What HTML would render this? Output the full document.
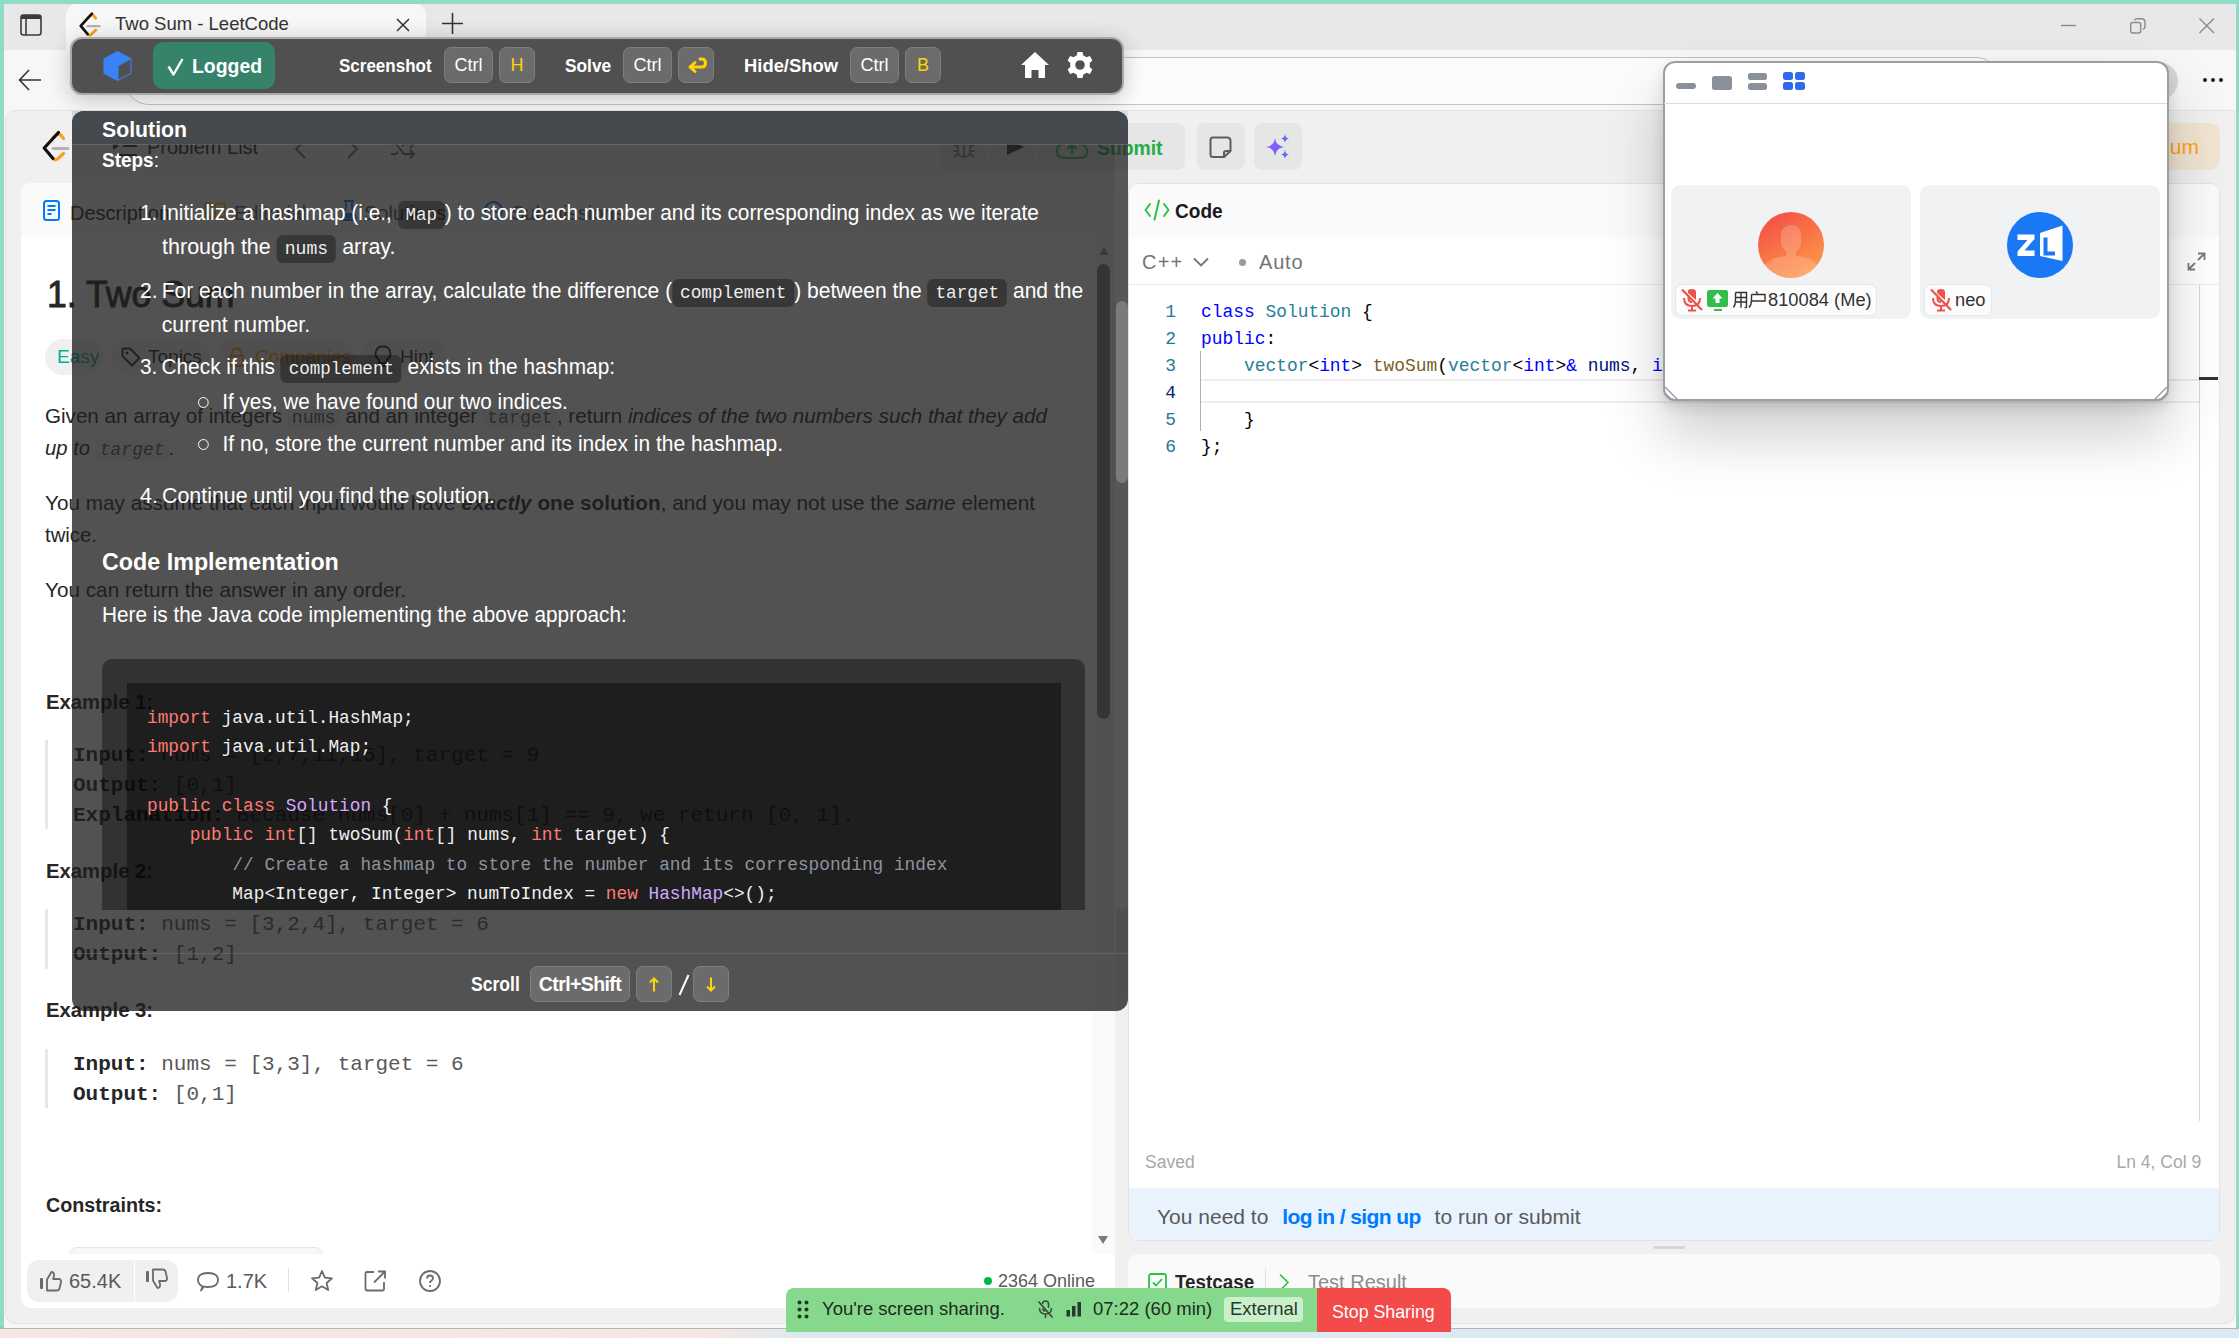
<!DOCTYPE html>
<html><head><meta charset="utf-8">
<style>
*{box-sizing:border-box;margin:0;padding:0}
html,body{width:2239px;height:1338px;overflow:hidden}
body{position:relative;background:#8ddcc8;font-family:"Liberation Sans",sans-serif;color:#262626}
.a{position:absolute;white-space:nowrap}
.mono{font-family:"Liberation Mono",monospace}
svg{position:absolute;overflow:visible}
/* browser */
#desk{left:0;top:1328px;width:2239px;height:10px;background:linear-gradient(90deg,#f7e6e1 0px,#f4e7e4 720px,#dde9ee 800px,#d9eaf2 2239px)}
#tabstrip{left:4px;top:4px;width:2232px;height:46px;background:#e8e8e8}
#tab{left:66px;top:4px;width:360px;height:48px;background:#f7f7f7;border-radius:10px 10px 0 0}
#toolbar{left:4px;top:50px;width:2232px;height:1278px;background:#f7f7f7}
#addr{left:125px;top:57px;width:1875px;height:48px;border:1.5px solid #c4c4c4;border-radius:24px;background:#fcfcfc}
#page{left:5px;top:110px;width:2230px;height:1214px;background:#f0f0f0;border-radius:10px 0 10px 10px;border:1px solid #e4e4e4}
.lcbtn{background:#e6e6e6;border-radius:8px}
.panel{background:#fff;border-radius:10px;overflow:hidden}

.desc{transform-origin:0 0;left:45px;font-size:20.3px;color:#262626;line-height:20px}
.desc code{font-family:"Liberation Mono",monospace;font-size:18px;color:#595959;background:#f7f7f7;border:1px solid #eee;border-radius:5px;padding:0 3px}
.exh{transform-origin:0 0;left:46px;font-size:20.3px;font-weight:bold;color:#262626;line-height:20px}
.ex{left:73px;font-family:"Liberation Mono",monospace;font-size:21px;color:#595959;line-height:21px}
.ex b{color:#262626}

.ovt{color:#fff;line-height:1}
.ovl{left:140px;font-size:21.4px;color:#fff;line-height:21px;transform-origin:0 0}
.ovl .n{display:inline-block;width:22px}
.ovl code{font-family:"Liberation Mono",monospace;font-size:18px;background:rgba(0,0,0,0.32);border-radius:6px;padding:4px 8px;color:#eee}
.ovl .bul{display:inline-block;width:11px;height:11px;border:1.5px solid #fff;border-radius:50%;margin-right:14px;vertical-align:1px}
.ovc{left:147px;font-family:"Liberation Mono",monospace;font-size:17.8px;color:#f0f0f0;line-height:18px;white-space:pre}
.ovc .k{color:#ff7b72}.ovc .c{color:#d2a8ff}.ovc .cm{color:#8b949e}
.kc{background:#6b6b6b;border:1px solid #7e7e7e;border-radius:7px;text-align:center;font-size:18px;line-height:34px}

.lnum{left:1150px;width:26px;text-align:right;font-family:"Liberation Mono",monospace;font-size:17.9px;color:#237893;line-height:18px}
.ed{left:1201px;font-family:"Liberation Mono",monospace;font-size:17.9px;color:#000;line-height:18px;white-space:pre}
.ed .kw{color:#0000ff}.ed .ty{color:#267f99}.ed .fn{color:#795e26}.ed .va{color:#001080}
</style></head><body>
<div id="desk" class="a"></div>
<div class="a" style="left:0;top:1327px;width:2239px;height:1.5px;background:#b5b5b5"></div>
<div id="tabstrip" class="a"></div>
<div id="tab" class="a"></div>
<div id="toolbar" class="a"></div>
<!-- sidebar icon -->
<svg style="left:20px;top:14px" width="22" height="22" viewBox="0 0 22 22"><rect x="1" y="1" width="20" height="20" rx="2.5" fill="none" stroke="#3a3a3a" stroke-width="1.6"/><rect x="1" y="1" width="20" height="4" fill="#3a3a3a"/><line x1="6" y1="5" x2="6" y2="21" stroke="#3a3a3a" stroke-width="1.6"/></svg>
<!-- lc favicon -->
<svg style="left:79px;top:12px" width="22" height="26" viewBox="0 0 28 32"><path d="M10.5 7.5L14.5 3.8Q16.5 2.3 18.5 4L21.5 7.5M11 27.5Q13 29.8 15.5 28L21.5 22.5" fill="none" stroke="#f89f1b" stroke-width="3.4" stroke-linecap="round"/><path d="M16.5 1.5L2.2 17L11 27.5" fill="none" stroke="#111" stroke-width="3.4" stroke-linecap="round" stroke-linejoin="round"/><path d="M11 17.5H26" stroke="#b3b3b3" stroke-width="3" stroke-linecap="round"/></svg>
<div class="a" style="left:115px;top:15px;font-size:18.5px;color:#333;line-height:1">Two Sum - LeetCode</div>
<svg style="left:396px;top:18px" width="14" height="14" viewBox="0 0 14 14"><path d="M1 1L13 13M13 1L1 13" stroke="#333" stroke-width="1.5"/></svg>
<svg style="left:442px;top:13px" width="21" height="21" viewBox="0 0 21 21"><path d="M10.5 0V21M0 10.5H21" stroke="#333" stroke-width="1.6"/></svg>
<svg style="left:2061px;top:18px" width="16" height="16" viewBox="0 0 16 16"><path d="M0 7.5H15" stroke="#8a8a8a" stroke-width="1.4"/></svg>
<svg style="left:2130px;top:18px" width="16" height="16" viewBox="0 0 16 16"><rect x="0.7" y="4.5" width="10" height="10.5" rx="2" fill="none" stroke="#8a8a8a" stroke-width="1.4"/><path d="M4.5 2.2Q5 0.7 7 0.7H11.5Q15 0.7 15 4V8.5Q15 10.5 13 11" fill="none" stroke="#8a8a8a" stroke-width="1.4"/></svg>
<svg style="left:2199px;top:18px" width="16" height="16" viewBox="0 0 16 16"><path d="M0.5 0.5L15 15M15 0.5L0.5 15" stroke="#8a8a8a" stroke-width="1.4"/></svg>
<!-- toolbar -->
<svg style="left:18px;top:68px" width="24" height="24" viewBox="0 0 24 24"><path d="M23 12H2M11 2L1.5 12L11 22" fill="none" stroke="#333" stroke-width="1.6"/></svg>
<div id="addr" class="a"></div>
<div class="a" style="left:2140px;top:62px;width:38px;height:38px;border-radius:19px;background:#d9d9d9"></div>

<div class="a" style="left:2203px;top:78px;width:4px;height:4px;border-radius:2px;background:#222;box-shadow:8px 0 0 #222,16px 0 0 #222"></div>

<!-- LeetCode page -->
<div id="page" class="a"></div>
<svg style="left:42px;top:131px" width="28" height="32" viewBox="0 0 28 32"><path d="M10.5 7.5L14.5 3.8Q16.5 2.3 18.5 4L21.5 7.5M11 27.5Q13 29.8 15.5 28L21.5 22.5" fill="none" stroke="#f89f1b" stroke-width="3.2" stroke-linecap="round"/><path d="M16.5 1.5L2.2 17L11 27.5" fill="none" stroke="#111" stroke-width="3.2" stroke-linecap="round" stroke-linejoin="round"/><path d="M11 17.5H26" stroke="#b3b3b3" stroke-width="2.8" stroke-linecap="round"/></svg>
<div class="a" style="left:82px;top:140px;width:1px;height:22px;background:#ddd"></div>
<!-- problem list -->
<svg style="left:112px;top:140px" width="26" height="20" viewBox="0 0 26 20"><path d="M1 2L7 6L1 10Z" fill="#333"/><path d="M11 6H25M4 15H25" stroke="#333" stroke-width="2.2"/></svg>
<div class="a" style="left:147px;top:136px;font-size:20px;color:#262626">Problem List</div>
<svg style="left:293px;top:138px" width="14" height="22" viewBox="0 0 14 22"><path d="M12 2L3 11L12 20" fill="none" stroke="#6a6a6a" stroke-width="1.8"/></svg>
<svg style="left:346px;top:138px" width="14" height="22" viewBox="0 0 14 22"><path d="M2 2L11 11L2 20" fill="none" stroke="#6a6a6a" stroke-width="1.8"/></svg>
<svg style="left:390px;top:138px" width="26" height="22" viewBox="0 0 26 22"><path d="M1 6H6L14 16H24M1 16H6L8 13.5M12 8.5L14 6H24M20 2L24 6L20 10M20 12L24 16L20 20" fill="none" stroke="#6a6a6a" stroke-width="1.8"/></svg>
<!-- center buttons -->
<div class="a lcbtn" style="left:940px;top:123px;width:245px;height:47px"></div>
<div class="a" style="left:988px;top:128px;width:1px;height:37px;background:#f7f7f7"></div>
<div class="a" style="left:1036px;top:128px;width:1px;height:37px;background:#f7f7f7"></div>
<svg style="left:952px;top:136px" width="24" height="22" viewBox="0 0 24 22"><path d="M8 3Q12 0 16 3M6 8H18V15Q18 21 12 21Q6 21 6 15ZM12 8V21M2 9L6 11M22 9L18 11M1 15H6M23 15H18M2 21L6 18M22 21L18 18" fill="none" stroke="#777" stroke-width="1.6"/></svg>
<svg style="left:1005px;top:137px" width="20" height="20" viewBox="0 0 20 20"><path d="M2 2L19 10L2 18Z" fill="#333"/></svg>
<svg style="left:1056px;top:136px" width="32" height="24" viewBox="0 0 32 24"><path d="M9 22H24Q31 22 31 15Q31 9 24 8Q22 1 15 1Q8 1 7 8Q1 9 1 15Q1 22 9 22Z" fill="none" stroke="#28c244" stroke-width="2.2"/><path d="M16 18V9M11.5 13L16 8.5L20.5 13" fill="none" stroke="#28c244" stroke-width="2.2"/></svg>
<div class="a" style="left:1097px;top:137px;font-size:21px;line-height:1;font-weight:bold;color:#1fae48;transform:scaleX(0.92);transform-origin:0 0">Submit</div>
<div class="a lcbtn" style="left:1197px;top:123px;width:48px;height:47px"></div>
<svg style="left:1209px;top:136px" width="24" height="22" viewBox="0 0 24 22"><path d="M4 1.5H18Q21.5 1.5 21.5 5V15L15 21H4Q1.5 21 1.5 18.5V4Q1.5 1.5 4 1.5ZM21.5 15H17Q15 15 15 17V21" fill="none" stroke="#5c5c5c" stroke-width="2"/></svg>
<div class="a lcbtn" style="left:1254px;top:123px;width:48px;height:47px"></div>
<svg style="left:1264px;top:133px" width="28" height="28" viewBox="0 0 28 28"><defs><linearGradient id="sg" x1="0" y1="0" x2="1" y2="1"><stop offset="0" stop-color="#a451f7"/><stop offset="1" stop-color="#5c6cf5"/></linearGradient></defs><path d="M11 5Q12 13 20 14Q12 15 11 23Q10 15 2 14Q10 13 11 5Z" fill="url(#sg)"/><path d="M21 1Q21.5 5 25 5.5Q21.5 6 21 10Q20.5 6 17 5.5Q20.5 5 21 1Z" fill="#5c6cf5"/><path d="M21 17Q21.5 21 25 21.5Q21.5 22 21 26Q20.5 22 17 21.5Q20.5 21 21 17Z" fill="#5c6cf5"/></svg>
<div class="a" style="left:2080px;top:123px;width:140px;height:47px;background:#f2e4d2;border-radius:10px"></div>
<div class="a" style="left:2115px;top:136px;font-size:21px;line-height:1;color:#ffa116">Premium</div>

<!-- LEFT PANEL -->
<div id="lp" class="a panel" style="left:21px;top:183px;width:1094px;height:1125px">
  <div class="a" style="left:0;top:0;width:1094px;height:54px;background:#fafafa"></div>
</div>


<!-- LEFT PANEL CONTENT -->
<svg style="left:43px;top:200px" width="17" height="21" viewBox="0 0 17 21"><rect x="1" y="1" width="15" height="19" rx="2.5" fill="none" stroke="#007aff" stroke-width="2"/><path d="M4.5 6H12.5M4.5 10H12.5M4.5 14H8.5" stroke="#007aff" stroke-width="2"/></svg>
<div class="a" style="left:70px;top:202px;font-size:20px;color:#262626">Description</div>
<div class="a" style="left:191px;top:202px;width:1px;height:20px;background:#e0e0e0"></div>
<svg style="left:204px;top:201px" width="22" height="20" viewBox="0 0 22 20"><path d="M1 3Q6 1 11 4Q16 1 21 3V17Q16 15 11 18Q6 15 1 17Z" fill="none" stroke="#ffb800" stroke-width="1.8"/><path d="M11 4V18" stroke="#ffb800" stroke-width="1.8"/></svg>
<div class="a" style="left:234px;top:202px;font-size:20px;color:#5a5a5a">Editorial</div>
<div class="a" style="left:325px;top:202px;width:1px;height:20px;background:#e0e0e0"></div>
<svg style="left:341px;top:199px" width="16" height="22" viewBox="0 0 16 22"><path d="M5 2V9L1 19Q1 21 3 21H13Q15 21 15 19L11 9V2M3 2H13M2.5 15H13.5" fill="none" stroke="#007aff" stroke-width="1.8"/><path d="M3 15H13L14.5 19.5H1.5Z" fill="#007aff"/></svg>
<div class="a" style="left:364px;top:202px;font-size:20px;color:#5a5a5a">Solutions</div>
<div class="a" style="left:469px;top:202px;width:1px;height:20px;background:#e0e0e0"></div>
<svg style="left:482px;top:200px" width="22" height="21" viewBox="0 0 22 21"><path d="M3 10.5A8.5 8.5 0 1 1 5.5 16.5" fill="none" stroke="#007aff" stroke-width="1.8"/><path d="M0.5 8L3 11L6 8.5M11.5 5.5V10.5L15 12.5" fill="none" stroke="#007aff" stroke-width="1.8"/></svg>
<div class="a" style="left:511px;top:202px;font-size:20px;color:#5a5a5a">Submissions</div>

<div class="a" style="left:47px;top:274px;font-size:36px;color:#262626;-webkit-text-stroke:0.9px #262626;transform:scaleX(0.99);transform-origin:0 0">1. Two Sum</div>
<div class="a" style="left:45px;top:339px;width:58px;height:36px;border-radius:18px;background:#f0f0f0"></div>
<div class="a" style="left:57px;top:346px;font-size:19px;color:#00af9b">Easy</div>
<div class="a" style="left:111px;top:339px;width:98px;height:36px;border-radius:18px;background:#f0f0f0"></div>
<svg style="left:121px;top:347px" width="20" height="20" viewBox="0 0 20 20"><path d="M1.5 2.5V9L11 18.5L18.5 11L9 1.5H2.5Z" fill="none" stroke="#262626" stroke-width="1.8" stroke-linejoin="round"/><circle cx="6" cy="6" r="1.5" fill="#262626"/></svg>
<div class="a" style="left:148px;top:346px;font-size:19px;color:#262626">Topics</div>
<div class="a" style="left:216px;top:339px;width:138px;height:36px;border-radius:18px;background:#f0f0f0"></div>
<svg style="left:228px;top:347px" width="17" height="20" viewBox="0 0 17 20"><path d="M4 9V6Q4 1.5 8.5 1.5Q13 1.5 13 6V9M2 9H15V19H2Z" fill="none" stroke="#ffa116" stroke-width="1.8"/></svg>
<div class="a" style="left:255px;top:346px;font-size:19px;color:#ffa116">Companies</div>
<div class="a" style="left:361px;top:339px;width:85px;height:36px;border-radius:18px;background:#f0f0f0"></div>
<svg style="left:374px;top:345px" width="18" height="24" viewBox="0 0 18 24"><path d="M9 1.5A7 7 0 0 0 5 14.5V18H13V14.5A7 7 0 0 0 9 1.5ZM6 21H12" fill="none" stroke="#262626" stroke-width="1.8"/></svg>
<div class="a" style="left:400px;top:346px;font-size:19px;color:#262626">Hint</div>

<div class="a desc" style="top:406px;transform:scaleX(1.0157)">Given an array of integers <code>nums</code> and an integer <code>target</code>, return <i>indices of the two numbers such that they add</i></div>
<div class="a desc" style="top:438px"><i>up to <code>target</code></i>.</div>
<div class="a desc" style="top:493px;transform:scaleX(1.022)">You may assume that each input would have <b><i>exactly</i> one solution</b>, and you may not use the <i>same</i> element</div>
<div class="a desc" style="top:525px">twice.</div>
<div class="a desc" style="top:580px;transform:scaleX(1.022)">You can return the answer in any order.</div>

<div class="a exh" style="top:692px">Example 1:</div>
<div class="a" style="left:45px;top:740px;width:3px;height:89px;background:#e8e8e8"></div>
<div class="a ex" style="top:745px"><b>Input:</b> nums = [2,7,11,15], target = 9</div>
<div class="a ex" style="top:775px"><b>Output:</b> [0,1]</div>
<div class="a ex" style="top:805px"><b>Explanation:</b> Because nums[0] + nums[1] == 9, we return [0, 1].</div>
<div class="a exh" style="top:861px">Example 2:</div>
<div class="a" style="left:45px;top:909px;width:3px;height:60px;background:#e8e8e8"></div>
<div class="a ex" style="top:914px"><b>Input:</b> nums = [3,2,4], target = 6</div>
<div class="a ex" style="top:944px"><b>Output:</b> [1,2]</div>
<div class="a exh" style="top:1000px">Example 3:</div>
<div class="a" style="left:45px;top:1049px;width:3px;height:59px;background:#e8e8e8"></div>
<div class="a ex" style="top:1054px"><b>Input:</b> nums = [3,3], target = 6</div>
<div class="a ex" style="top:1084px"><b>Output:</b> [0,1]</div>
<div class="a exh" style="top:1195px;transform:scaleX(0.972)">Constraints:</div>
<div class="a" style="left:69px;top:1247px;width:254px;height:20px;border-radius:8px 8px 0 0;border:1px solid #e6e6e6;background:#f7f7f7"></div>
<div class="a" style="left:21px;top:1254px;width:1094px;height:54px;background:#fff;border-radius:0 0 10px 10px"></div>
<div class="a" style="left:1092px;top:237px;width:23px;height:1017px;background:#fafafa"></div>
<!-- scrollbar arrow -->
<svg style="left:1097px;top:1235px" width="12" height="10" viewBox="0 0 12 10"><path d="M1 1H11L6 9Z" fill="#7a7a7a"/></svg>
<!-- bottom bar -->
<div class="a" style="left:27px;top:1260px;width:107px;height:42px;border-radius:12px 0 0 12px;background:#f0f0f0"></div>
<div class="a" style="left:135px;top:1260px;width:43px;height:42px;border-radius:0 12px 12px 0;background:#f0f0f0"></div>
<svg style="left:39px;top:1270px" width="24" height="22" viewBox="0 0 24 22"><rect x="1" y="8" width="3" height="11" rx="1" fill="#6b6b6b"/><path d="M8 9.5L12.5 2Q15.5 2 15 6L14 9H20Q22.5 9.5 22 12L20.5 18.5Q20 20.5 17.5 20.5H8Z" fill="none" stroke="#6b6b6b" stroke-width="1.8" stroke-linejoin="round"/></svg>
<div class="a" style="left:69px;top:1270px;font-size:20px;color:#595959">65.4K</div>
<svg style="left:145px;top:1268px" width="24" height="22" viewBox="0 0 24 22"><rect x="1" y="3" width="3" height="11" rx="1" fill="#6b6b6b"/><path d="M8 12.5L12.5 20Q15.5 20 15 16L14 13H20Q22.5 12.5 22 10L20.5 3.5Q20 1.5 17.5 1.5H8Z" fill="none" stroke="#6b6b6b" stroke-width="1.8" stroke-linejoin="round"/></svg>
<svg style="left:196px;top:1271px" width="24" height="21" viewBox="0 0 24 21"><path d="M5 19.5L6.5 15.5Q2 13 2 9Q2 2 12 2Q22 2 22 9Q22 16 12 16Q9.5 16 8 15.5Z" fill="none" stroke="#6b6b6b" stroke-width="1.8" stroke-linejoin="round"/></svg>
<div class="a" style="left:226px;top:1270px;font-size:20px;color:#595959">1.7K</div>
<div class="a" style="left:288px;top:1268px;width:1px;height:24px;background:#e0e0e0"></div>
<svg style="left:310px;top:1269px" width="24" height="24" viewBox="0 0 24 24"><path d="M12 2L14.9 8.6L22 9.3L16.6 14L18.2 21L12 17.3L5.8 21L7.4 14L2 9.3L9.1 8.6Z" fill="none" stroke="#6b6b6b" stroke-width="1.8" stroke-linejoin="round"/></svg>
<svg style="left:364px;top:1270px" width="24" height="22" viewBox="0 0 24 22"><path d="M10 2H3Q1.5 2 1.5 3.5V19Q1.5 20.5 3 20.5H18.5Q20 20.5 20 19V12M14 1.5H21V8.5M21 1.5L10 12.5" fill="none" stroke="#6b6b6b" stroke-width="1.8"/></svg>
<svg style="left:418px;top:1270px" width="24" height="24" viewBox="0 0 24 24"><circle cx="12" cy="11" r="10" fill="none" stroke="#6b6b6b" stroke-width="1.8"/><path d="M9 8.5Q9 5.5 12 5.5Q15 5.5 15 8.3Q15 10 13 11Q12 11.7 12 13" fill="none" stroke="#6b6b6b" stroke-width="1.8"/><circle cx="12" cy="16" r="1.1" fill="#6b6b6b"/></svg>
<div class="a" style="left:984px;top:1277px;width:8px;height:8px;border-radius:4px;background:#00b84a"></div>
<div class="a" style="left:998px;top:1271px;font-size:18px;color:#595959">2364 Online</div>

<!-- RIGHT PANEL -->
<div id="rp" class="a panel" style="left:1128px;top:183px;width:1092px;height:1058px;border:1px solid #e3e3e3">
  <div class="a" style="left:0;top:0;width:1092px;height:53px;background:#fafafa"></div>
  <div class="a" style="left:0;top:100px;width:1092px;height:1px;background:#ececec"></div>
  <div class="a" style="left:0;top:1004px;width:1092px;height:54px;background:#e8f3fd"></div>
</div>
<svg style="left:1144px;top:199px" width="26" height="22" viewBox="0 0 26 22"><path d="M6 5L1.5 11L6 17M20 5L24.5 11L20 17M15 1.5L10.5 20.5" fill="none" stroke="#28c244" stroke-width="2" stroke-linecap="round" stroke-linejoin="round"/></svg>
<div class="a" style="left:1175px;top:200.5px;font-size:20.5px;font-weight:bold;color:#1a1a1a;line-height:1;transform:scaleX(0.93);transform-origin:0 0">Code</div>
<div class="a" style="left:1142px;top:252px;font-size:20px;color:#737373;line-height:1;letter-spacing:1.2px">C++</div>
<svg style="left:1193px;top:257px" width="16" height="10" viewBox="0 0 16 10"><path d="M1 1.5L8 8.5L15 1.5" fill="none" stroke="#737373" stroke-width="1.8"/></svg>
<div class="a" style="left:1239px;top:259px;width:7px;height:7px;border-radius:4px;background:#9a9a9a"></div>
<div class="a" style="left:1259px;top:252px;font-size:20px;color:#737373;line-height:1;letter-spacing:0.8px">Auto</div>
<svg style="left:2187px;top:252px" width="19" height="19" viewBox="0 0 19 19"><path d="M11 1.5H17.5V8M17.5 1.5L11 8M8 17.5H1.5V11M1.5 17.5L8 11" fill="none" stroke="#7a7a7a" stroke-width="1.8"/></svg>
<!-- editor -->
<div class="a" style="left:1200px;top:379px;width:1000px;height:24px;border-top:2px solid #eeeeee;border-bottom:2px solid #eeeeee"></div>
<div class="a" style="left:1200px;top:351px;width:1px;height:80px;background:#b0b0b0"></div>
<div class="a lnum" style="top:303px">1</div>
<div class="a lnum" style="top:330px">2</div>
<div class="a lnum" style="top:357px">3</div>
<div class="a lnum" style="top:384px;color:#0b216f">4</div>
<div class="a lnum" style="top:411px">5</div>
<div class="a lnum" style="top:438px">6</div>
<div class="a ed" style="top:303px"><span class="kw">class</span> <span class="ty">Solution</span> {</div>
<div class="a ed" style="top:330px"><span class="kw">public</span>:</div>
<div class="a ed" style="top:357px">    <span class="ty">vector</span>&lt;<span class="kw">int</span>&gt; <span class="fn">twoSum</span>(<span class="ty">vector</span>&lt;<span class="kw">int</span>&gt;<span class="kw">&amp;</span> <span class="va">nums</span>, <span class="kw">int</span> <span class="va">target</span>) {</div>
<div class="a ed" style="top:411px">    }</div>
<div class="a ed" style="top:438px">};</div>
<div class="a" style="left:2199px;top:285px;width:1px;height:836px;background:#d9d9d9"></div>
<div class="a" style="left:2199px;top:377px;width:19px;height:3px;background:#333"></div>
<div class="a" style="left:1145px;top:1154px;font-size:17.5px;color:#a8a8a8;line-height:1">Saved</div>
<div class="a" style="left:2116.5px;top:1154px;font-size:17.5px;color:#a8a8a8;line-height:1">Ln 4, Col 9</div>
<div class="a" style="left:1157px;top:1206px;font-size:21px;color:#595959;line-height:1">You need to <span style="color:#007aff;margin:0 8px;font-weight:bold;letter-spacing:-0.6px">log in / sign up</span> to run or submit</div>
<div class="a" style="left:1653px;top:1246px;width:32px;height:3px;border-radius:2px;background:#d6d6d6"></div>
<!-- testcase panel -->
<div class="a" style="left:1128px;top:1254px;width:1092px;height:54px;border-radius:10px;background:#fafafa"></div>
<svg style="left:1148px;top:1273px" width="19" height="19" viewBox="0 0 19 19"><rect x="1" y="1" width="17" height="17" rx="2" fill="none" stroke="#28c244" stroke-width="1.8"/><path d="M5 9.5L8 12.5L14 6" fill="none" stroke="#28c244" stroke-width="1.8"/></svg>
<div class="a" style="left:1175px;top:1272px;font-size:20px;font-weight:bold;color:#262626;line-height:1;transform:scaleX(0.94);transform-origin:0 0">Testcase</div>
<div class="a" style="left:1265px;top:1268px;width:1px;height:24px;background:#e0e0e0"></div>
<svg style="left:1278px;top:1273px" width="12" height="19" viewBox="0 0 12 19"><path d="M2 1.5L10 9.5L2 17.5" fill="none" stroke="#28c244" stroke-width="1.6"/></svg>
<div class="a" style="left:1308px;top:1272px;font-size:20px;color:#8c8c8c;line-height:1">Test Result</div>


<div class="a" style="left:1118px;top:111px;width:10px;height:10px;background:#d3e2ef"></div>
<div class="a" style="left:72px;top:111px;width:10px;height:10px;background:#c9d9e8"></div>
<!-- ===== OVERLAY SOLUTION PANEL ===== -->
<div class="a" style="left:72px;top:111px;width:1056px;height:900px;border-radius:12px 12px 12px 12px;background:rgba(30,30,30,0.77);overflow:hidden">
  <div class="a" style="left:0;top:0;width:1056px;height:33px;background:#464a4e"></div>
  <div class="a" style="left:0;top:33px;width:1056px;height:1px;background:rgba(120,120,120,0.55)"></div>
  <div class="a" style="left:0;top:842px;width:1056px;height:1px;background:rgba(120,120,120,0.45)"></div>
  <div class="a" style="left:1043px;top:33px;width:1px;height:809px;background:rgba(110,110,110,0.35)"></div>
</div>
<div class="a ovt" style="left:102px;top:117.6px;font-size:22.9px;font-weight:bold;transform:scaleX(0.929);transform-origin:0 0">Solution</div>
<div class="a ovt" style="left:102px;top:149.7px;font-size:20.4px;transform:scaleX(0.93);transform-origin:0 0"><b>Steps</b>:</div>
<div class="a ovl" style="top:203.1px;transform:scaleX(0.974)"><span class="n">1.</span>Initialize a hashmap (i.e., <code>Map</code>) to store each number and its corresponding index as we iterate</div>
<div class="a ovl" style="top:236.7px;transform:scaleX(1.004)"><span class="n"></span>through the <code>nums</code> array.</div>
<div class="a ovl" style="top:281.1px;transform:scaleX(0.984)"><span class="n">2.</span>For each number in the array, calculate the difference (<code>complement</code>) between the <code>target</code> and the</div>
<div class="a ovl" style="top:314.7px;transform:scaleX(0.99)"><span class="n"></span>current number.</div>
<div class="a ovl" style="top:356.8px;transform:scaleX(0.975)"><span class="n">3.</span>Check if this <code>complement</code> exists in the hashmap:</div>
<div class="a ovl" style="top:391.9px;left:198px;transform:scaleX(0.969)"><span class="bul"></span>If yes, we have found our two indices.</div>
<div class="a ovl" style="top:434.3px;left:198px;transform:scaleX(0.98)"><span class="bul"></span>If no, store the current number and its index in the hashmap.</div>
<div class="a ovl" style="top:485.7px"><span class="n">4.</span>Continue until you find the solution.</div>
<div class="a ovt" style="left:102px;top:550.4px;font-size:23.9px;font-weight:bold;transform:scaleX(0.975);transform-origin:0 0">Code Implementation</div>
<div class="a ovl" style="top:605.1px;left:102px;transform:scaleX(0.97)">Here is the Java code implementing the above approach:</div>
<div class="a" style="left:102px;top:659px;width:983px;height:251px;border-radius:10px 10px 0 0;background:rgba(0,0,0,0.38)"></div>
<div class="a" style="left:127px;top:683px;width:934px;height:227px;background:rgba(0,0,0,0.40)"></div>
<div class="a ovc" style="top:709px"><span class="k">import</span> java.util.HashMap;</div>
<div class="a ovc" style="top:738px"><span class="k">import</span> java.util.Map;</div>
<div class="a ovc" style="top:797px"><span class="k">public class</span> <span class="c">Solution</span> {</div>
<div class="a ovc" style="top:826px">    <span class="k">public int</span>[] twoSum(<span class="k">int</span>[] nums, <span class="k">int</span> target) {</div>
<div class="a ovc" style="top:856px">        <span class="cm">// Create a hashmap to store the number and its corresponding index</span></div>
<div class="a ovc" style="top:885px">        Map&lt;Integer, Integer&gt; numToIndex = <span class="k">new</span> <span class="c">HashMap</span>&lt;&gt;();</div>
<!-- overlay scrollbar -->
<svg style="left:1098px;top:246px" width="12" height="10" viewBox="0 0 12 10"><path d="M6 1L11 9H1Z" fill="#3a3a3a"/></svg>
<div class="a" style="left:1097px;top:264px;width:13px;height:455px;border-radius:7px;background:#353535"></div>
<div class="a" style="left:1115.5px;top:144px;width:12.5px;height:766px;border-radius:0 0 6px 6px;background:rgba(255,255,255,0.045)"></div>
<div class="a" style="left:1116px;top:301px;width:12px;height:182px;border-radius:6px;background:#7b7b7b"></div>
<!-- footer -->
<div class="a ovt" style="left:471px;top:975px;font-size:19.5px;font-weight:bold;transform:scaleX(0.9);transform-origin:0 0">Scroll</div>
<div class="a kc" style="left:530px;top:966px;width:100px;height:36px;color:#fff;font-size:19.5px;font-weight:bold;letter-spacing:-0.6px">Ctrl+Shift</div>
<div class="a kc" style="left:636px;top:966px;width:36px;height:36px"></div><svg style="left:648px;top:977px" width="12" height="15" viewBox="0 0 12 15"><path d="M6 1.5V14.5M2 5.5L6 1.5L10 5.5" fill="none" stroke="#ffd400" stroke-width="2"/></svg>
<svg style="left:677px;top:974px" width="14" height="22" viewBox="0 0 14 22"><path d="M11.5 1L2.5 21" stroke="#fff" stroke-width="2"/></svg>
<div class="a kc" style="left:693px;top:966px;width:36px;height:36px"></div><svg style="left:705px;top:977px" width="12" height="15" viewBox="0 0 12 15"><path d="M6 0.5V13.5M2 9.5L6 13.5L10 9.5" fill="none" stroke="#ffd400" stroke-width="2"/></svg>

<!-- ===== OVERLAY TOOLBAR ===== -->
<div class="a" style="left:70px;top:37px;width:1054px;height:58px;border-radius:12px;background:#505050;border:2px solid #a9a9a9;box-shadow:0 4px 22px rgba(0,0,0,0.22)"></div>
<svg style="left:102px;top:50px" width="31" height="32" viewBox="0 0 31 32"><path d="M15.5 1L29.5 8.5V23.5L15.5 31L1.5 23.5V8.5Z" fill="#3a82f7"/><path d="M16.5 16L28.5 9.5V23L16.5 29.5Z" fill="#505050"/><path d="M18 16.8L27 11.8V22.2L18 27.2Z" fill="#3a82f7" opacity="0"/></svg>
<div class="a" style="left:153px;top:42px;width:122px;height:47px;border-radius:10px;background:#35836a"></div>
<svg style="left:167px;top:58px" width="17" height="18" viewBox="0 0 17 18"><path d="M1.5 8.5L6.5 16.5L15.5 1" fill="none" stroke="#fff" stroke-width="2.4" stroke-linejoin="round"/></svg>
<div class="a ovt" style="left:192px;top:56px;font-size:20px;font-weight:bold;transform:scaleX(0.97);transform-origin:0 0">Logged</div>
<div class="a ovt" style="left:339px;top:56px;font-size:19px;font-weight:bold;transform:scaleX(0.895);transform-origin:0 0">Screenshot</div>
<div class="a kc" style="left:444px;top:47px;width:49px;height:36px;color:#fff">Ctrl</div>
<div class="a kc" style="left:499px;top:47px;width:36px;height:36px;color:#ffd400">H</div>
<div class="a ovt" style="left:565px;top:56px;font-size:19px;font-weight:bold;transform:scaleX(0.91);transform-origin:0 0">Solve</div>
<div class="a kc" style="left:623px;top:47px;width:49px;height:36px;color:#fff">Ctrl</div>
<div class="a kc" style="left:678px;top:47px;width:36px;height:36px;color:#ffd400"><svg style="left:8px;top:10px" width="20" height="16" viewBox="0 0 20 16"><path d="M13 1H15Q18.5 1 18.5 5Q18.5 9 15 9H4M8 4.5L3 9L8 13.5" fill="none" stroke="#ffd400" stroke-width="3" stroke-linecap="round" stroke-linejoin="round"/></svg></div>
<div class="a ovt" style="left:744px;top:56px;font-size:19px;font-weight:bold;transform:scaleX(0.968);transform-origin:0 0">Hide/Show</div>
<div class="a kc" style="left:850px;top:47px;width:49px;height:36px;color:#fff">Ctrl</div>
<div class="a kc" style="left:905px;top:47px;width:36px;height:36px;color:#ffd400">B</div>
<svg style="left:1020px;top:51px" width="30" height="28" viewBox="0 0 30 28"><path d="M15 1L29 14H25V27H18.5V19H11.5V27H5V14H1Z" fill="#fff"/></svg>
<svg style="left:1066px;top:51px" width="28" height="28" viewBox="0 0 28 28"><path fill="#fff" fill-rule="evenodd" d="M11.5 1H16.5L17.3 4.6Q19 5.2 20.4 6.3L23.9 5.1L26.4 9.4L23.7 11.9Q24 13.9 23.7 16.1L26.4 18.6L23.9 22.9L20.4 21.7Q19 22.8 17.3 23.4L16.5 27H11.5L10.7 23.4Q9 22.8 7.6 21.7L4.1 22.9L1.6 18.6L4.3 16.1Q4 14 4.3 11.9L1.6 9.4L4.1 5.1L7.6 6.3Q9 5.2 10.7 4.6ZM14 9.2A4.8 4.8 0 1 0 14 18.8A4.8 4.8 0 1 0 14 9.2Z"/></svg>


<!-- ===== MEETING WINDOW ===== -->
<div class="a" style="left:1663px;top:61px;width:506px;height:340px;border-radius:12px;background:#fff;border:2px solid #9e9e9e;box-shadow:0 34px 60px rgba(0,0,0,0.20),0 6px 14px rgba(0,0,0,0.12)"></div>
<div class="a" style="left:1664px;top:102.5px;width:503px;height:1.5px;background:#dcdcdc"></div>
<div class="a" style="left:1676px;top:82.5px;width:20px;height:6px;border-radius:3px;background:#8a9099"></div>
<div class="a" style="left:1712px;top:75.5px;width:20px;height:14px;border-radius:2.5px;background:#8a9099"></div>
<div class="a" style="left:1748px;top:72.5px;width:19px;height:7.5px;border-radius:2.5px;background:#8a9099"></div>
<div class="a" style="left:1748px;top:82.5px;width:19px;height:7.5px;border-radius:2.5px;background:#8a9099"></div>
<div class="a" style="left:1783px;top:72px;width:10px;height:8px;border-radius:2.5px;background:#2f6bf0;box-shadow:12px 0 0 #2f6bf0,0 10px 0 #2f6bf0,12px 10px 0 #2f6bf0"></div>
<div class="a" style="left:1671px;top:185px;width:240px;height:134px;border-radius:9px;background:#f1f2f4"></div>
<div class="a" style="left:1920px;top:185px;width:240px;height:134px;border-radius:9px;background:#f1f2f4"></div>
<svg style="left:1758px;top:211.5px" width="66" height="66" viewBox="0 0 66 66"><defs><linearGradient id="av" x1="0.2" y1="0" x2="0.8" y2="1"><stop offset="0" stop-color="#f34f46"/><stop offset="1" stop-color="#fe9c48"/></linearGradient><clipPath id="avc"><circle cx="33" cy="33" r="33"/></clipPath></defs><circle cx="33" cy="33" r="33" fill="url(#av)"/><g clip-path="url(#avc)" fill="#ffffff" opacity="0.2"><rect x="23" y="13" width="20" height="27" rx="9"/><path d="M28 38H38V44Q54 45 60 54V70H6V54Q12 45 28 44Z"/></g></svg>
<svg style="left:2007px;top:211.5px" width="66" height="66" viewBox="0 0 66 66"><circle cx="33" cy="33" r="33" fill="#1a78f4"/><path d="M10.5 22.5H27.5V27L17.5 38.5H27.5V44H10.5V39.5L20.5 28H10.5Z" fill="#fff"/><path d="M33 21L55.5 13.5V49L33 44Z" fill="#fff"/><path d="M36.5 25.5H40.5V39.5H48V43.5H36.5Z" fill="#1a78f4"/></svg>
<div class="a" style="left:1675px;top:284px;width:202px;height:32px;border-radius:7px;background:#fcfcfd;border:1px solid #e4e6ea"></div>
<div class="a" style="left:1924px;top:284px;width:68px;height:32px;border-radius:7px;background:#fcfcfd;border:1px solid #e4e6ea"></div>
<svg style="left:1681px;top:288px" width="22" height="24" viewBox="0 0 22 24"><path d="M7 3Q7 1 11 1Q15 1 15 4V12L7 5Z" fill="#f0504a"/><path d="M3 10Q3 18 11 18Q19 18 19 10M11 18V22.5M7 22.5H15M7.5 9V11Q8 14 11 14" fill="none" stroke="#f0504a" stroke-width="2"/><path d="M1 1.5L21 22" stroke="#f0504a" stroke-width="2.2"/></svg>
<svg style="left:1707px;top:290px" width="22" height="22" viewBox="0 0 22 22"><rect x="0" y="0" width="21" height="17" rx="2.5" fill="#32be48"/><path d="M10.5 3L5.5 8.5H8.5V13H12.5V8.5H15.5Z" fill="#fff"/><rect x="7" y="19" width="8" height="2" fill="#32be48"/></svg>
<svg style="left:1733px;top:291px" width="34" height="17" viewBox="0 0 34 17"><g fill="none" stroke="#333" stroke-width="1.4"><path d="M2.5 1.5V9Q2.5 14 0.5 16.5M2.5 1.5H13.5V16Q13.5 16.8 11.5 16.5M2.5 6.5H13.5M2.5 11H13.5M8 1.5V16.8"/><path d="M23 0.5L24.5 2.5M18.5 3.5H32V10H18.5M18.5 3.5V9Q18.5 14 16 16.5"/></g></svg>
<div class="a" style="left:1768px;top:291px;font-size:18.3px;color:#333;line-height:1">810084 (Me)</div>
<svg style="left:1930px;top:288px" width="22" height="24" viewBox="0 0 22 24"><path d="M7 3Q7 1 11 1Q15 1 15 4V12L7 5Z" fill="#f0504a"/><path d="M3 10Q3 18 11 18Q19 18 19 10M11 18V22.5M7 22.5H15M7.5 9V11Q8 14 11 14" fill="none" stroke="#f0504a" stroke-width="2"/><path d="M1 1.5L21 22" stroke="#f0504a" stroke-width="2.2"/></svg>
<div class="a" style="left:1955px;top:291px;font-size:18.3px;color:#333;line-height:1">neo</div>
<svg style="left:1664px;top:383px" width="18" height="18" viewBox="0 0 18 18"><path d="M1 4L14 17M1 10L8 17" stroke="#8d96a3" stroke-width="1.3"/></svg>
<svg style="left:2150px;top:383px" width="18" height="18" viewBox="0 0 18 18"><path d="M17 4L4 17M17 10L10 17" stroke="#8d96a3" stroke-width="1.3"/></svg>

<!-- ===== SCREEN SHARE BAR ===== -->
<div class="a" style="left:786px;top:1288px;width:531px;height:44px;border-radius:8px 0 0 0;background:#86d98c"></div>
<div class="a" style="left:1317px;top:1288px;width:134px;height:44px;border-radius:0 8px 0 0;background:#f34a4a"></div>
<svg style="left:797px;top:1300px" width="13" height="19" viewBox="0 0 13 19"><g fill="#1e3a1e"><circle cx="2.5" cy="2.5" r="2"/><circle cx="9.5" cy="2.5" r="2"/><circle cx="2.5" cy="9.5" r="2"/><circle cx="9.5" cy="9.5" r="2"/><circle cx="2.5" cy="16.5" r="2"/><circle cx="9.5" cy="16.5" r="2"/></g></svg>
<div class="a" style="left:822px;top:1300px;font-size:18.5px;color:#1d2b1d;line-height:1">You're screen sharing.</div>
<svg style="left:1037px;top:1300px" width="17" height="19" viewBox="0 0 17 19"><path d="M5.5 4Q5.5 1 8.5 1Q11.5 1 11.5 4V8M2.5 8Q2.5 14 8.5 14Q14.5 14 14.5 8M8.5 14V18M5.5 8.5Q6 11 8.5 11" fill="none" stroke="#3a4a3a" stroke-width="1.5"/><path d="M1.5 1.5L15.5 17.5" stroke="#3a4a3a" stroke-width="1.6"/></svg>
<svg style="left:1066px;top:1301px" width="16" height="16" viewBox="0 0 16 16"><rect x="0.5" y="9" width="3.5" height="6.5" fill="#2a3a2a"/><rect x="6" y="5" width="3.5" height="10.5" fill="#2a3a2a"/><rect x="11.5" y="1" width="3.5" height="14.5" fill="#2a3a2a"/></svg>
<div class="a" style="left:1093px;top:1300px;font-size:18.5px;color:#1d2b1d;line-height:1">07:22 (60 min)</div>
<div class="a" style="left:1224px;top:1297px;width:79px;height:25px;border-radius:4px;background:#c9f0cb"></div>
<div class="a" style="left:1230px;top:1300px;font-size:18.5px;color:#2a3a2a;line-height:1">External</div>
<div class="a" style="left:1332px;top:1303px;font-size:18.5px;color:#fff;line-height:1;transform:scaleX(0.96);transform-origin:0 0">Stop Sharing</div>

</body></html>
